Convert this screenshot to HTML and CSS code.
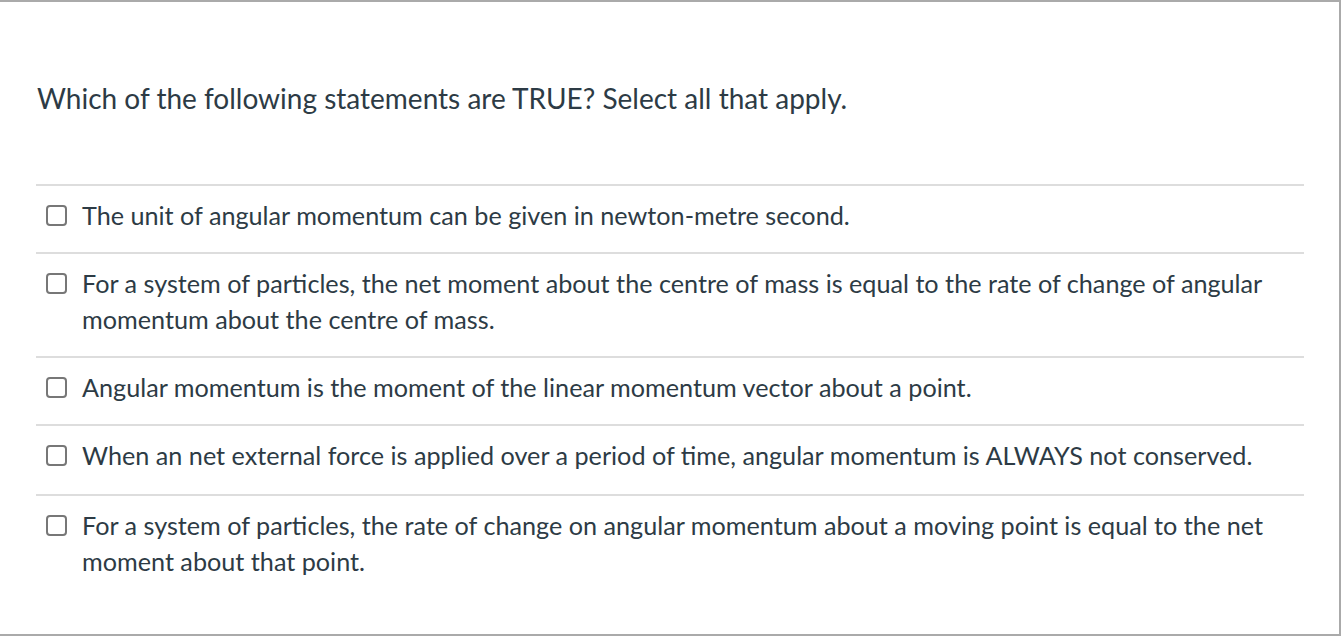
FILE: index.html
```html
<!DOCTYPE html>
<html>
<head>
<meta charset="utf-8">
<link rel="stylesheet" href="styles.css">
</head>
<body>
<div class="question">
  <div class="question-text">Which of the following statements are TRUE? Select all that apply.</div>
  <div class="answers">
    <label class="answer"><span class="box"></span><span class="answer-text">The unit of angular momentum can be given in newton-metre second.</span></label>
    <label class="answer"><span class="box"></span><span class="answer-text">For a system of particles, the net moment about the centre of mass is equal to the rate of change of angular momentum about the centre of mass.</span></label>
    <label class="answer"><span class="box"></span><span class="answer-text">Angular momentum is the moment of the linear momentum vector about a point.</span></label>
    <label class="answer"><span class="box"></span><span class="answer-text">When an net external force is applied over a period of time, angular momentum is ALWAYS not conserved.</span></label>
    <label class="answer"><span class="box"></span><span class="answer-text">For a system of particles, the rate of change on angular momentum about a moving point is equal to the net moment about that point.</span></label>
  </div>
</div>
</body>
</html>
```
FILE: styles.css
```css
html, body {
  margin: 0;
  padding: 0;
  background: #fff;
}
body {
  font-family: Lato, "Liberation Sans", sans-serif;
  color: #2d3b45;
}
.question {
  box-sizing: border-box;
  width: 1341px;
  height: 636px;
  border-top: 2px solid #aaaaaa;
  border-right: 2px solid #aaaaaa;
  border-bottom: 2px solid #aaaaaa;
}
.question-text {
  font-size: 28px;
  line-height: 37px;
  padding: 78px 0 0 37px;
  height: 104px;
}
.answers {
  margin: 0 35px 0 36px;
}
.answer {
  display: flex;
  align-items: flex-start;
  border-top: 2px solid #dddddd;
  padding: 11px 0 19px 0;
  font-size: 25.2px;
  line-height: 36px;
}
.answer:nth-child(4) {
  padding-bottom: 21px;
}
.box {
  flex: none;
  box-sizing: border-box;
  width: 21px;
  height: 21px;
  margin: 8px 15px 0 10px;
  border: 2px solid #777;
  border-radius: 4px;
}
.answer-text {
  flex: 1;
}
```
